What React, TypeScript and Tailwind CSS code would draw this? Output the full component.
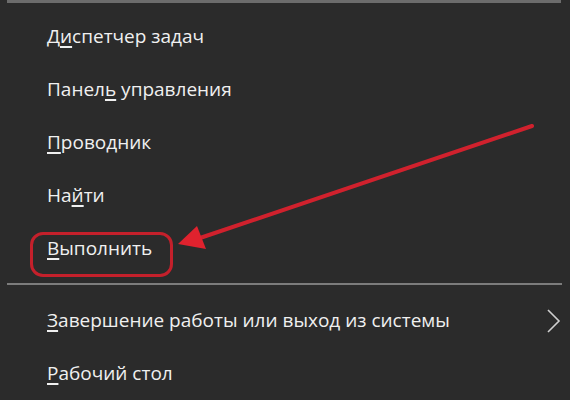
import React from "react";

type Item = { pre: string; u: string; post: string };

const top: Item[] = [
  { pre: "Д", u: "и", post: "спетчер задач" },
  { pre: "Панел", u: "ь", post: " управления" },
  { pre: "", u: "П", post: "роводник" },
  { pre: "На", u: "й", post: "ти" },
  { pre: "", u: "В", post: "ыполнить" },
];

function Label({ it }: { it: Item }) {
  return (
    <span className="whitespace-pre">
      {it.pre}
      <span className="underline decoration-[2px] underline-offset-[3px]">{it.u}</span>
      {it.post}
    </span>
  );
}

export default function App() {
  return (
    <div
      className="relative w-[570px] h-[400px] overflow-hidden bg-[#2b2b2b] text-[#f0f0f0] text-[19px]"
      style={{ fontFamily: '"Open Sans", "Noto Sans", sans-serif' }}
    >
      <div className="mx-[7px] w-[554px] h-[3px] bg-[#6c6c6c]" />
      <div className="flex flex-col pt-[7px]">
        {top.map((it, i) => (
          <div key={i} className="h-[53px] flex items-center pl-[47px]">
            <Label it={it} />
          </div>
        ))}
        <div className="mt-[8px] mb-[9px] ml-[7px] w-[555px] h-[2px] bg-[#7c7c7c]" />
        <div className="h-[53px] flex items-center pl-[47px] pr-[8px] justify-between">
          <Label it={{ pre: "", u: "З", post: "авершение работы или выход из системы" }} />
          <svg width="16" height="24" viewBox="0 0 16 24" className="text-[#cfcfcf]">
            <path d="M2 1 L13 12 L2 23" fill="none" stroke="currentColor" strokeWidth="1.6" />
          </svg>
        </div>
        <div className="h-[53px] flex items-center pl-[47px]">
          <Label it={{ pre: "", u: "Р", post: "абочий стол" }} />
        </div>
      </div>

      <div className="absolute left-[30px] top-[232px] w-[143px] h-[45px] rounded-[13px] border-[3px] border-[#c4202b]" />
      <svg className="absolute left-0 top-0" width="570" height="400" viewBox="0 0 570 400">
        <line x1="532" y1="126" x2="200" y2="238" stroke="#d0212d" strokeWidth="4" strokeLinecap="round" />
        <polygon points="178,244 197,226 206,249" fill="#e0222e" />
      </svg>
    </div>
  );
}
